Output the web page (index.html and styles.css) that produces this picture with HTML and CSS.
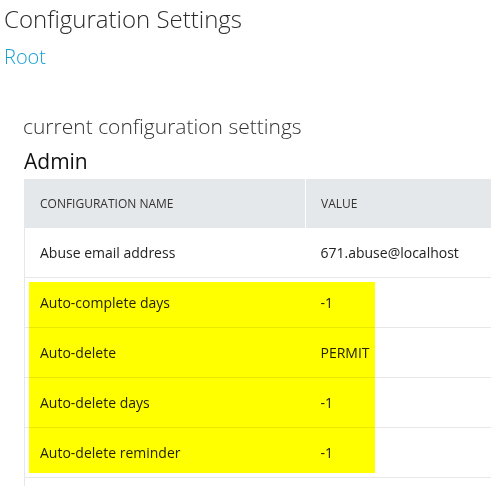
FILE: index.html
```html
<!DOCTYPE html>
<html>
<head>
<meta charset="utf-8">
<link rel="stylesheet" href="styles.css">
</head>
<body>
<div class="page">
  <h1 class="title">Configuration Settings</h1>
  <a class="crumb">Root</a>
  <section class="section">
    <h2 class="subtitle">current configuration settings</h2>
    <h3 class="group">Admin</h3>
    <div class="table-wrap">
      <table class="config">
        <thead>
          <tr><th class="c-name">Configuration Name</th><th class="c-val">Value</th></tr>
        </thead>
        <tbody>
          <tr><td>Abuse email address</td><td>671.abuse@localhost</td></tr>
          <tr><td>Auto-complete days</td><td>-1</td></tr>
          <tr><td>Auto-delete</td><td>PERMIT</td></tr>
          <tr><td>Auto-delete days</td><td>-1</td></tr>
          <tr><td>Auto-delete reminder</td><td>-1</td></tr>
          <tr><td></td><td></td></tr>
        </tbody>
      </table>
      <div class="highlight"></div>
    </div>
  </section>
</div>
</body>
</html>
```
FILE: styles.css
```css
html, body {
  margin: 0;
  padding: 0;
  background: #fff;
  overflow: hidden;
}
body {
  font-family: "Open Sans", "Liberation Sans", sans-serif;
  color: #222;
}
.page {
  padding: 0 0 0 4px;
}
.title {
  margin: 0;
  padding-top: 3px;
  font-size: 24px;
  font-weight: 300;
  line-height: 32px;
  color: #2b2b2b;
}
.crumb {
  display: block;
  margin-top: 9px;
  font-size: 20px;
  font-weight: 300;
  line-height: 26px;
  color: #1aa0d2;
}
.section {
  margin-left: 20px;
  margin-top: 42px;
}
.subtitle {
  margin: 0 0 0 -1px;
  font-size: 21px;
  font-weight: 300;
  line-height: 28px;
  color: #333;
}
.group {
  margin: 8px 0 0 0;
  font-size: 21px;
  font-weight: 400;
  line-height: 26px;
  color: #111;
}
.table-wrap {
  position: relative;
  margin-top: 5px;
  width: 520px;
}
.config {
  width: 100%;
  border-collapse: collapse;
  border-left: 1px solid #e5e8eb;
  font-size: 14px;
}
.config th {
  background: #e5e8eb;
  height: 49px;
  padding: 0 0 0 15px;
  text-align: left;
  font-size: 12px;
  font-weight: 400;
  text-transform: uppercase;
  color: #333;
}
.config th.c-name {
  width: 265px;
  border-right: 1px solid #fff;
}
.config td {
  height: 49px;
  padding: 0 0 0 15px;
  border-bottom: 1px solid #e8e8e8;
  color: #222;
}
.config td:first-child {
  width: 265px;
}
.highlight {
  position: absolute;
  left: 5px;
  top: 103px;
  width: 346px;
  height: 191px;
  background: #ffff00;
  mix-blend-mode: multiply;
}
```
